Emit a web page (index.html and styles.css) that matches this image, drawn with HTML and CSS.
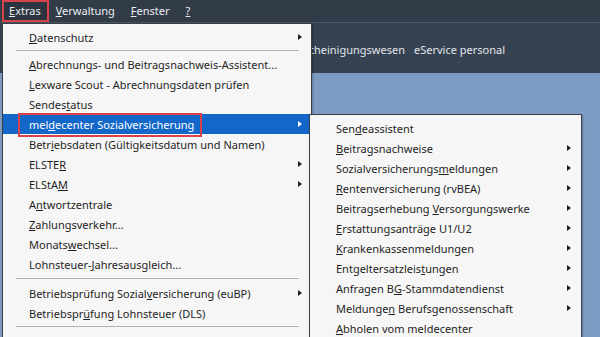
FILE: index.html
```html
<!DOCTYPE html>
<html lang="de">
<head>
<meta charset="utf-8">
<title>Extras Menü</title>
<link rel="stylesheet" href="styles.css">
</head>
<body>
<div class="app">
  <div class="menubar">
    <span class="mb-item mb-active"><u>E</u>xtras</span>
    <span class="mb-item"><u>V</u>erwaltung</span>
    <span class="mb-item"><u>F</u>enster</span>
    <span class="mb-item"><u>?</u></span>
  </div>
  <div class="header">
    <nav class="nav">
      <span>Bescheinigungswesen</span>
      <span>eService personal</span>
    </nav>
  </div>
  <div class="content"></div>

  <div class="menu menu-main">
    <div class="item"><span class="label"><u>D</u>atenschutz</span><span class="arrow"></span></div>
    <div class="sep"></div>
    <div class="item"><span class="label"><u>A</u>brechnungs- und Beitragsnachweis-Assistent...</span></div>
    <div class="item"><span class="label"><u>L</u>exware Scout - Abrechnungsdaten prüfen</span></div>
    <div class="item"><span class="label">Sendes<u>t</u>atus</span></div>
    <div class="item item-active"><span class="label label-marked">mel<u>d</u>ecenter Sozialversicherung</span><span class="arrow"></span></div>
    <div class="item"><span class="label">Betr<u>i</u>ebsdaten (Gültigkeitsdatum und Namen)</span></div>
    <div class="item"><span class="label">ELSTE<u>R</u></span><span class="arrow"></span></div>
    <div class="item"><span class="label">ELStA<u>M</u></span><span class="arrow"></span></div>
    <div class="item"><span class="label">A<u>n</u>twortzentrale</span></div>
    <div class="item"><span class="label"><u>Z</u>ahlungsverkehr...</span></div>
    <div class="item"><span class="label">Monats<u>w</u>echsel...</span></div>
    <div class="item"><span class="label">Lohnsteuer-<u>J</u>ahresausgleich...</span></div>
    <div class="sep sep-wide"></div>
    <div class="item"><span class="label">Betriebsprüfung Sozial<u>v</u>ersicherung (euBP)</span><span class="arrow"></span></div>
    <div class="item"><span class="label">Betriebspr<u>ü</u>fung Lohnsteuer (DLS)</span></div>
    <div class="sep"></div>
  </div>

  <div class="menu menu-sub">
    <div class="item"><span class="label">Sen<u>d</u>eassistent</span></div>
    <div class="item"><span class="label"><u>B</u>eitragsnachweise</span><span class="arrow"></span></div>
    <div class="item"><span class="label">Sozialversicherungs<u>m</u>eldungen</span><span class="arrow"></span></div>
    <div class="item"><span class="label"><u>R</u>entenversicherung (rvBEA)</span><span class="arrow"></span></div>
    <div class="item"><span class="label">Beitragserhebung <u>V</u>ersorgungswerke</span><span class="arrow"></span></div>
    <div class="item"><span class="label"><u>E</u>rstattungsanträge U1/U2</span><span class="arrow"></span></div>
    <div class="item"><span class="label"><u>K</u>rankenkassenmeldungen</span><span class="arrow"></span></div>
    <div class="item"><span class="label">Entgeltersatzleis<u>t</u>ungen</span><span class="arrow"></span></div>
    <div class="item"><span class="label">Anfragen B<u>G</u>-Stammdatendienst</span><span class="arrow"></span></div>
    <div class="item"><span class="label">Meldunge<u>n</u> Berufsgenossenschaft</span><span class="arrow"></span></div>
    <div class="item"><span class="label"><u>A</u>bholen vom meldecenter</span></div>
  </div>
</div>
</body>
</html>
```
FILE: styles.css
```css
html, body {
  margin: 0;
  padding: 0;
}
body {
  width: 600px;
  height: 337px;
  overflow: hidden;
  font-family: "Noto Sans", "Open Sans", "DejaVu Sans", sans-serif;
  font-size: 11px;
  background: #7e9cc3;
}
.app {
  position: relative;
  width: 600px;
  height: 337px;
  display: flex;
  flex-direction: column;
  overflow: hidden;
}
.menubar {
  height: 22px;
  background: #323c49;
  display: flex;
  align-items: center;
  padding-left: 2px;
  color: #eceef1;
  flex: none;
}
.mb-item {
  padding: 0 8px;
  line-height: 18px;
}
.mb-active {
  border: 2px solid #d8434b;
  padding: 0 6px 0 5px;
  margin-top: -1px;
  margin-right: -1px;
  background: #2b3440;
}
.header {
  height: 50px;
  flex: none;
  background: #364251;
  border-top: 1px solid #4a5462;
  display: flex;
  align-items: center;
  justify-content: flex-end;
  padding-right: 95px;
}
.nav {
  display: flex;
  gap: 9px;
  color: #e1e6ec;
  font-size: 11px;
  margin-top: 2px;
}
.content {
  flex: 1;
  background: #7e9cc3;
}

.menu {
  position: absolute;
  background: #f6f6f6;
  border: 1px solid #3a3f46;
  box-sizing: border-box;
  color: #1f1f1f;
  box-shadow: 1px 1px 2px rgba(0,0,0,0.25);
  padding-bottom: 20px;
}
.menu-main {
  left: 2px;
  top: 23px;
  width: 310px;
  padding-top: 3px;
}
.menu-sub {
  left: 309px;
  top: 114px;
  width: 273px;
  padding-top: 3px;
}
.item {
  height: 20px;
  display: flex;
  align-items: center;
  padding-left: 26px;
  padding-right: 9px;
  white-space: nowrap;
}
.menu-sub .item {
  padding-left: 26px;
  padding-right: 10px;
}
.label {
  position: relative;
}
.arrow {
  margin-left: auto;
  width: 0;
  height: 0;
  border-left: 4px solid #222;
  border-top: 3.5px solid transparent;
  border-bottom: 3.5px solid transparent;
}
.item-active {
  background: #1267c9;
  color: #ffffff;
  margin: 0 -1px 0 0;
}
.item-active .arrow {
  border-left-color: #ffffff;
  margin-right: 1px;
}
.label-marked::after {
  content: "";
  position: absolute;
  left: -11px;
  right: -8px;
  top: -4px;
  bottom: -5px;
  border: 2px solid #d8434b;
}
.sep {
  height: 7px;
  display: flex;
  align-items: center;
  margin: 0 12px 0 13px;
}
.sep::before {
  content: "";
  flex: 1;
  height: 1px;
  background: #b1b1b1;
}
.sep-wide {
  height: 9px;
}
```
